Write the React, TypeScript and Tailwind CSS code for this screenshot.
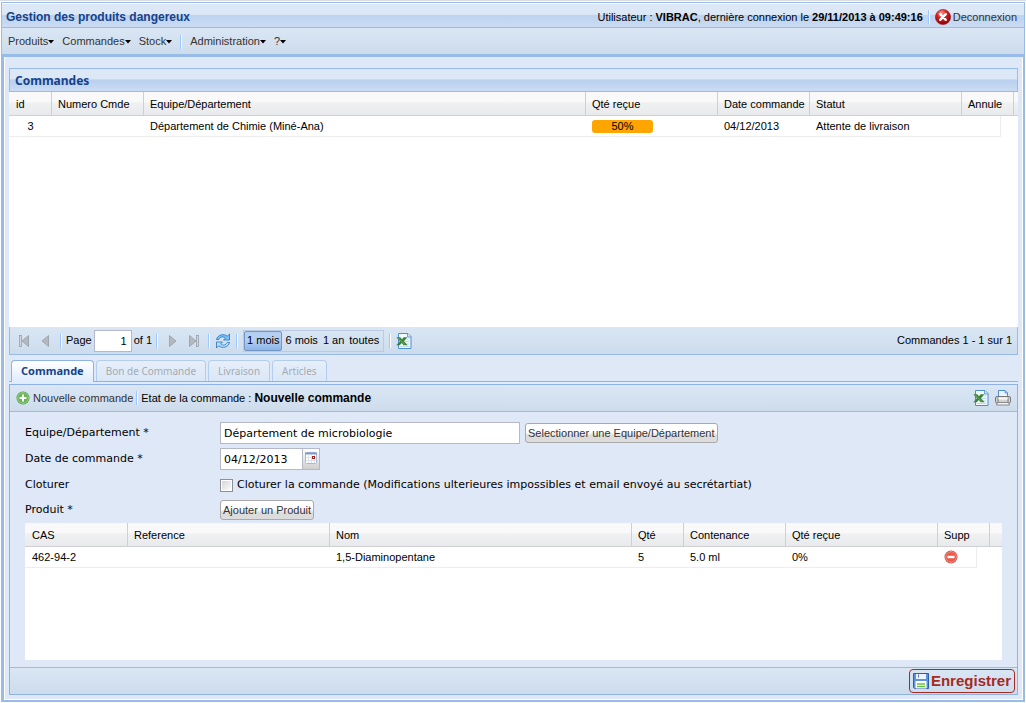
import type { ReactNode } from "react";

const menus = ["Produits", "Commandes", "Stock"];
const periods = ["1 mois", "6 mois", "1 an", "toutes"];
const tabs = ["Commande", "Bon de Commande", "Livraison", "Articles"];

const orders = [
  {
    id: "3",
    number: "",
    team: "Département de Chimie (Miné-Ana)",
    received: "50%",
    date: "04/12/2013",
    status: "Attente de livraison",
  },
];

const products = [
  { cas: "462-94-2", reference: "", name: "1,5-Diaminopentane", qty: "5", content: "5.0 ml", received: "0%" },
];

function Caret() {
  return (
    <svg width="6" height="4" viewBox="0 0 6 4" aria-hidden="true">
      <path d="M0 0h6L3 3.500z" fill="#000" />
    </svg>
  );
}

function Separator() {
  return <span className="h-[14px] w-[2px] shrink-0 border-l border-[#98c8ff] bg-white" />;
}

function LogoutIcon() {
  return (
    <svg width="16" height="16" viewBox="0 0 16 16" aria-hidden="true">
      <defs>
        <radialGradient id="logout" cx="40%" cy="25%" r="75%">
          <stop offset="0" stopColor="#f59a94" />
          <stop offset="0.450" stopColor="#d61f1f" />
          <stop offset="1" stopColor="#8e0008" />
        </radialGradient>
      </defs>
      <circle cx="8" cy="8" r="7.600" fill="url(#logout)" stroke="#9c1015" strokeWidth="0.600" />
      <path d="M5.200 5.200l5.600 5.600M10.800 5.200l-5.600 5.600" stroke="#fff" strokeWidth="2.400" strokeLinecap="round" />
    </svg>
  );
}

function AddIcon() {
  return (
    <svg width="14" height="14" viewBox="0 0 14 14" aria-hidden="true">
      <circle cx="7" cy="7" r="6.500" fill="#4a9a3c" />
      <circle cx="7" cy="7" r="5.400" fill="#67b556" stroke="#a9dc9b" strokeWidth="0.800" />
      <path d="M7 3.600v6.800M3.600 7h6.800" stroke="#fff" strokeWidth="2" />
    </svg>
  );
}

function DeleteIcon() {
  return (
    <svg width="14" height="14" viewBox="0 0 14 14" aria-hidden="true">
      <circle cx="7" cy="7" r="6.500" fill="#c83b33" />
      <circle cx="7" cy="7" r="5.400" fill="#ea5a4c" stroke="#f7a79c" strokeWidth="0.800" />
      <path d="M3.500 7h7" stroke="#fff" strokeWidth="2.400" />
    </svg>
  );
}

function ExcelIcon() {
  return (
    <svg width="16" height="16" viewBox="0 0 16 16" aria-hidden="true">
      <path d="M2.500 0.500h9.500l3 3v12h-12.500z" fill="#f3f8fe" stroke="#4a90cf" />
      <path d="M11.500 0.500V4H15" fill="#cfe3f8" stroke="#4a90cf" strokeWidth="0.800" />
      <path d="M9 6h4.500M9 8.500h4.500M9 11h4.500M4 13.500h9.500" stroke="#c3d8ef" />
      <path d="M0.300 4.200h4l1.700 2 1.700-2h3.600L8 8.200l3.700 4H7.500L5.800 10l-2 2.200H0.300l3.600-4z" fill="#3c8437" />
      <path d="M2.200 5l6.800 6.500" stroke="#79b471" strokeWidth="0.800" />
    </svg>
  );
}

function PrinterIcon() {
  return (
    <svg width="16" height="16" viewBox="0 0 16 16" aria-hidden="true">
      <path d="M3.500 7V0.500h6.500l2.500 2.500V7z" fill="#eaf4ff" stroke="#4b8bd0" />
      <path d="M10 0.500V3h2.500" fill="none" stroke="#4b8bd0" strokeWidth="0.800" />
      <rect x="0.500" y="6.500" width="15" height="6.500" rx="1.500" fill="#d3d3d3" stroke="#777" />
      <path d="M3 7.500v5M13 7.500v5" stroke="#777" />
      <path d="M3.500 8.500h9" stroke="#fafafa" strokeWidth="2" />
      <path d="M2.500 12.500h11l1 2.500h-13z" fill="#f6f6f6" stroke="#888" />
    </svg>
  );
}

function RefreshIcon() {
  return (
    <svg width="16" height="16" viewBox="0 0 16 16" aria-hidden="true">
      <path
        d="M1.500 6.500C2.500 2 8.500 0 12.300 3.200L14.500 1v6H8.500l2-2C8 3 5 3.800 3.800 6.500z"
        fill="#7cc0f5"
        stroke="#2f7fc8"
        strokeWidth="0.900"
        strokeLinejoin="round"
      />
      <path
        d="M14.500 9.500C13.500 14 7.500 16 3.700 12.800L1.500 15V9h6l-2 2C8 13 11 12.200 12.200 9.500z"
        fill="#b9defb"
        stroke="#2f7fc8"
        strokeWidth="0.900"
        strokeLinejoin="round"
      />
    </svg>
  );
}

function SaveIcon() {
  return (
    <svg width="16" height="16" viewBox="0 0 16 16" aria-hidden="true">
      <path d="M0.500 0.500h15v15h-14l-1-1z" fill="#5c93dc" stroke="#2c5fae" />
      <rect x="3" y="1" width="10" height="5" fill="#eef4fc" />
      <path d="M5.500 1.500v3" stroke="#4a7cc4" />
      <rect x="2.500" y="8" width="11" height="7.500" fill="#fff" />
      <path d="M4 11h8M4 13.500h8" stroke="#6cc04a" strokeWidth="1.500" />
    </svg>
  );
}

function CalendarIcon() {
  return (
    <svg width="12" height="12" viewBox="0 0 12 12" aria-hidden="true">
      <rect x="0.500" y="0.500" width="11" height="11" rx="1" fill="#fff" stroke="#a9b9d3" />
      <path d="M0 1.500h12" stroke="#7e9bc8" strokeWidth="2" />
      <path d="M3.500 3v8M6.500 3v8M9.500 3v8M1 5.500h10M1 8.500h10" stroke="#dde3ee" />
      <rect x="7.500" y="4.500" width="2" height="2" fill="#fff" stroke="#a02020" />
    </svg>
  );
}

function PagerIcon({ end, flip }: { end?: boolean; flip?: boolean }) {
  return (
    <svg width="12" height="14" viewBox="0 0 12 14" aria-hidden="true" className={flip ? "-scale-x-100" : ""}>
      <path d="M1.500 1.500v11L8 7z" fill="#b4b9c0" stroke="#8f969f" strokeWidth="0.700" />
      {end && <rect x="8.500" y="1.500" width="2" height="11" fill="#d3d7dc" stroke="#8f969f" strokeWidth="0.700" />}
    </svg>
  );
}

function HeaderCell({ children, span }: { children?: ReactNode; span?: number }) {
  return (
    <th
      colSpan={span}
      className="h-6 border-r border-b border-[#d0d0d0] pt-px pl-[6px] text-left font-normal whitespace-nowrap first:pl-[7px] last:border-r-0"
    >
      {children}
    </th>
  );
}

function Cell({ children, className = "" }: { children?: ReactNode; className?: string }) {
  return <td className={`h-[21px] truncate border-b border-[#ededed] px-[6px] first:px-[7px] ${className}`}>{children}</td>;
}

const headerRow = "bg-linear-to-b from-[#f9f9f9] from-40% via-[#f0f1f2] via-45% to-[#e7e9ec]";
const toolbar = "flex items-center border-[#99bbe8] bg-linear-to-b from-[#dae6f4] to-[#cddcec]";
const greyButton =
  "h-5 rounded-[3px] border border-[#a9a9a9] bg-linear-to-b from-white from-45% to-[#dcdcdc] to-65% px-[2px] text-[11px] text-[#333] whitespace-nowrap";
const textField = "h-[22px] border border-[#b5b8c8] bg-white px-[3px] font-['DejaVu_Sans',sans-serif] text-[11px]";

function OrdersPanel() {
  return (
    <section>
      <h2 className="flex h-6 items-center border border-[#99bbe8] bg-linear-to-b from-[#dce8f5] from-45% via-[#b8d0ef] via-50% to-[#cbdcf3] pt-[2px] pl-[5px] font-['Noto_Sans',sans-serif] text-[12px] font-bold text-[#15428b]">
        Commandes
      </h2>
      <div className="h-[235px] bg-white">
        <table className="w-full table-fixed border-separate border-spacing-0">
          <colgroup>
            <col className="w-[43px]" />
            <col className="w-[92px]" />
            <col />
            <col className="w-[132px]" />
            <col className="w-[92px]" />
            <col className="w-[152px]" />
            <col className="w-[39px]" />
            <col className="w-[13px]" />
            <col className="w-[4px]" />
          </colgroup>
          <thead className={headerRow}>
            <tr>
              <HeaderCell>id</HeaderCell>
              <HeaderCell>Numero Cmde</HeaderCell>
              <HeaderCell>Equipe/Département</HeaderCell>
              <HeaderCell>Qté reçue</HeaderCell>
              <HeaderCell>Date commande</HeaderCell>
              <HeaderCell>Statut</HeaderCell>
              <HeaderCell span={2}>Annule</HeaderCell>
              <HeaderCell />
            </tr>
          </thead>
          <tbody>
            {orders.map((order) => (
              <tr key={order.id}>
                <Cell className="text-center">{order.id}</Cell>
                <Cell>{order.number}</Cell>
                <Cell>{order.team}</Cell>
                <Cell>
                  <div className="h-[13px] w-[61px] rounded-[3px] bg-[#ffa500] text-center leading-[13px]">{order.received}</div>
                </Cell>
                <Cell>{order.date}</Cell>
                <Cell>{order.status}</Cell>
                <Cell className="border-r" />
                <td colSpan={2} />
              </tr>
            ))}
          </tbody>
        </table>
      </div>
      <div className={`${toolbar} h-7 gap-2 border-x border-b pr-[5px] pl-2`}>
        <button aria-label="Première page" disabled>
          <PagerIcon end flip />
        </button>
        <button aria-label="Page précédente" disabled>
          <PagerIcon flip />
        </button>
        <div className="flex items-center gap-1 px-[2px]">
          <Separator />
          <label htmlFor="page">Page</label>
          <input id="page" defaultValue="1" className="-ml-[2px] h-[22px] w-[38px] border border-[#b5b8c8] bg-white px-1 text-right" />
          <span className="-ml-[2px]">of 1</span>
          <Separator />
        </div>
        <button aria-label="Page suivante" disabled>
          <PagerIcon />
        </button>
        <button aria-label="Dernière page" disabled>
          <PagerIcon end />
        </button>
        <div className="flex items-center gap-[5px]">
          <Separator />
          <button aria-label="Actualiser">
            <RefreshIcon />
          </button>
          <Separator />
          <div className="flex h-[22px] items-center gap-px border border-[#b9cbe0] pr-[2px]">
            {periods.map((period, index) => (
              <button
                key={period}
                className={
                  index === 0
                    ? "h-5 rounded-[2px] border border-[#7496c4] bg-linear-to-b from-[#b3cff2] from-45% to-[#8db5e8] px-[2px]"
                    : "px-[2px]"
                }
              >
                {period}
              </button>
            ))}
          </div>
          <Separator />
          <button aria-label="Exporter vers Excel">
            <ExcelIcon />
          </button>
        </div>
        <span className="ml-auto">Commandes 1 - 1 sur 1</span>
      </div>
    </section>
  );
}

function ProductsTable() {
  return (
    <div className="mt-[3px] mr-[15px] flex-1 bg-white">
      <table className="w-full table-fixed border-separate border-spacing-0">
        <colgroup>
          <col className="w-[103px]" />
          <col className="w-[202px]" />
          <col />
          <col className="w-[52px]" />
          <col className="w-[102px]" />
          <col className="w-[152px]" />
          <col className="w-[39px]" />
          <col className="w-[13px]" />
          <col className="w-[12px]" />
        </colgroup>
        <thead className={headerRow}>
          <tr>
            <HeaderCell>CAS</HeaderCell>
            <HeaderCell>Reference</HeaderCell>
            <HeaderCell>Nom</HeaderCell>
            <HeaderCell>Qté</HeaderCell>
            <HeaderCell>Contenance</HeaderCell>
            <HeaderCell>Qté reçue</HeaderCell>
            <HeaderCell span={2}>Supp</HeaderCell>
            <HeaderCell />
          </tr>
        </thead>
        <tbody>
          {products.map((product) => (
            <tr key={product.cas}>
              <Cell>{product.cas}</Cell>
              <Cell>{product.reference}</Cell>
              <Cell>{product.name}</Cell>
              <Cell>{product.qty}</Cell>
              <Cell>{product.content}</Cell>
              <Cell>{product.received}</Cell>
              <Cell className="border-r">
                <button aria-label="Supprimer" className="flex">
                  <DeleteIcon />
                </button>
              </Cell>
              <td colSpan={2} />
            </tr>
          ))}
        </tbody>
      </table>
    </div>
  );
}

function OrderForm() {
  return (
    <section className="mt-[5px] flex flex-1 flex-col">
      <div role="tablist" className="flex h-[22px] items-end gap-[2px] border-b border-[#8db2e3] pl-[2px] font-['Noto_Sans',sans-serif] text-[11px]">
        {tabs.map((tab, index) => (
          <button
            key={tab}
            role="tab"
            aria-selected={index === 0}
            className={
              index === 0
                ? "-mb-px h-[22px] rounded-t-[4px] border border-b-0 border-[#8db2e3] bg-linear-to-b from-white to-[#deecfd] px-[9px] font-bold text-[#15428b]"
                : "h-[21px] rounded-t-[4px] border border-b-0 border-[#b4cdee] bg-linear-to-b from-[#e6effa] to-[#dae7f7] px-[9px] text-[10px] text-[#a5aab3]"
            }
          >
            {tab}
          </button>
        ))}
      </div>
      <div className="h-[2px] bg-[#deecfd]" />
      <div className="flex flex-1 flex-col border border-[#8db2e3]">
        <div className={`${toolbar} h-[27px] gap-[3px] border-b px-[6px]`}>
          <button className="flex items-center gap-[3px] text-[#333]">
            <AddIcon />
            Nouvelle commande
          </button>
          <Separator />
          <p>
            Etat de la commande : <b className="text-[12px]">Nouvelle commande</b>
          </p>
          <div className="ml-auto flex gap-[6px]">
            <button aria-label="Exporter vers Excel">
              <ExcelIcon />
            </button>
            <button aria-label="Imprimer">
              <PrinterIcon />
            </button>
          </div>
        </div>
        <form className="flex flex-1 flex-col pt-[10px] pb-[7px] pl-[15px]" onSubmit={(event) => event.preventDefault()}>
          <div className="grid grid-cols-[195px_1fr] items-center gap-y-1 font-['DejaVu_Sans',sans-serif]">
            <label htmlFor="team">Equipe/Département *</label>
            <div className="flex h-[22px] items-center gap-[5px]">
              <input id="team" defaultValue="Département de microbiologie" className={`${textField} w-[300px]`} />
              <button className={`${greyButton} font-['Liberation_Sans',sans-serif]`}>Selectionner une Equipe/Département</button>
            </div>
            <label htmlFor="date">Date de commande *</label>
            <div className="flex h-[22px] items-center">
              <input id="date" defaultValue="04/12/2013" className={`${textField} w-[83px]`} />
              <button
                aria-label="Choisir une date"
                className="flex h-[22px] w-[17px] items-start justify-center border border-l-0 border-[#b5b8c8] bg-linear-to-b from-white to-[#cfcfcf] pt-[3px]"
              >
                <CalendarIcon />
              </button>
            </div>
            <span>Cloturer</span>
            <label className="flex h-[22px] items-center gap-1">
              <input type="checkbox" className="size-[13px] appearance-none border border-[#8a8f98] bg-linear-to-br from-[#d0d2d6] to-white inset-ring-1 inset-ring-white" />
              Cloturer la commande (Modifications ulterieures impossibles et email envoyé au secrétartiat)
            </label>
            <label htmlFor="add-product">Produit *</label>
            <div className="flex h-5 items-center">
              <button id="add-product" className={`${greyButton} font-['Liberation_Sans',sans-serif]`}>
                Ajouter un Produit
              </button>
            </div>
          </div>
          <ProductsTable />
        </form>
        <div className={`${toolbar} h-[27px] justify-end border-t px-[2px]`}>
          <button className="flex h-6 items-center gap-[2px] rounded-[4px] border border-[#a52a1f] px-[3px] text-[15px] font-bold text-[#a52a1f]">
            <SaveIcon />
            Enregistrer
          </button>
        </div>
      </div>
    </section>
  );
}

export default function App() {
  return (
    <div className="flex min-h-screen flex-col border-t border-[#d9dde0] bg-white px-px pb-px font-['Liberation_Sans',sans-serif] text-[11px] text-black">
      <header className="mt-px border border-b-0 border-[#99bbe8]">
        <div className="flex h-6 items-center border-t border-white bg-linear-to-b from-[#dce8f5] from-45% via-[#bdd3f0] via-50% to-[#cbdcf3] pt-[3px] pr-[7px] pl-1">
          <h1 className="text-[12px] font-bold text-[#15428b]">Gestion des produits dangereux</h1>
          <div className="ml-auto flex items-center gap-[5px]">
            <p>
              Utilisateur : <b>VIBRAC</b>, dernière connexion le <b>29/11/2013 à 09:49:16</b>
            </p>
            <Separator />
            <button className="flex items-center gap-[2px] text-[#333]">
              <LogoutIcon />
              Deconnexion
            </button>
          </div>
        </div>
        <nav className={`${toolbar} h-[27px] gap-2 border-t px-[6px] pt-px text-[#333]`}>
          {menus.map((menu) => (
            <button key={menu} className="flex items-center">
              {menu}
              <Caret />
            </button>
          ))}
          <Separator />
          <button className="flex items-center">
            Administration
            <Caret />
          </button>
          <button className="flex items-center">
            ?<Caret />
          </button>
        </nav>
      </header>
      <main className="flex flex-1 flex-col border-x-[3px] border-t-[3px] border-r-2 border-b-2 border-[#99bbe8] bg-[#dfe8f6] px-[5px] pt-[11px] pb-[5px] shadow-[inset_1px_-1px_white,inset_-1px_0_white]">
        <OrdersPanel />
        <OrderForm />
      </main>
    </div>
  );
}
